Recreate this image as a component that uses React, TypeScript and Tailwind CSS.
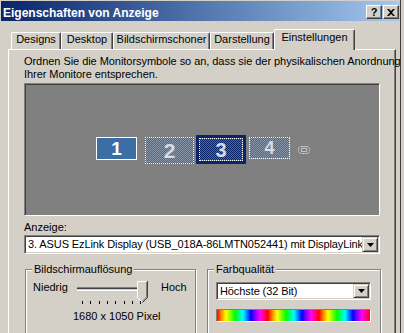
import type { ReactNode } from 'react'

function CaptionButton({ children }: { children: ReactNode }) {
  return (
    <div className="flex h-[14px] w-[16px] items-center justify-center border border-t-white border-l-white border-r-[#404040] border-b-[#404040] bg-[#d4d0c8] shadow-[inset_-1px_-1px_0_#808080]">
      {children}
    </div>
  )
}

function TitleBar() {
  return (
    <div className="flex h-[20px] w-[399px] items-start bg-gradient-to-r from-[#0a246a] to-[#a6caf0]">
      <div className="ml-[2px] mt-[6px] text-[12px] font-bold text-white">Eigenschaften von Anzeige</div>
      <div className="ml-auto mr-[1px] mt-[4px] flex gap-[1px]">
        <CaptionButton>
          <span className="text-[11px] font-bold leading-[11px]">?</span>
        </CaptionButton>
        <CaptionButton>
          <svg width="8" height="7" viewBox="0 0 8 7">
            <path d="M0 0h2l2 2 2-2h2L5 3.5 8 7H6L4 5 2 7H0l3-3.5z" fill="#000" />
          </svg>
        </CaptionButton>
      </div>
    </div>
  )
}

function Tab({ label, className, active }: { label: string; className: string; active?: boolean }) {
  if (active) {
    return (
      <div className={`mb-[-1px] flex h-[21px] justify-center rounded-t-[2px] border-t border-l border-r border-t-white border-l-white border-r-[#404040] bg-[#d4d0c8] pt-[1px] shadow-[inset_-1px_0_0_#808080] ${className}`}>
        {label}
      </div>
    )
  }
  return (
    <div className={`flex h-[17px] justify-center rounded-t-[2px] border-t border-l border-r border-t-white border-l-white border-r-[#404040] shadow-[inset_-1px_0_0_#808080] ${className}`}>
      {label}
    </div>
  )
}

function DropArrow() {
  return (
    <div className="flex h-full w-[16px] shrink-0 items-center justify-center border border-t-[#d4d0c8] border-l-[#d4d0c8] border-r-[#404040] border-b-[#404040] bg-[#d4d0c8] shadow-[inset_1px_1px_0_white,inset_-1px_-1px_0_#808080]">
      <svg width="7" height="4" viewBox="0 0 7 4">
        <path d="M0 0h7L3.5 4z" fill="#000" />
      </svg>
    </div>
  )
}

function Combo({ text, className }: { text: string; className: string }) {
  return (
    <div className={`flex border border-t-[#808080] border-l-[#808080] border-r-white border-b-white bg-white p-px shadow-[inset_1px_1px_0_#404040,inset_-1px_-1px_0_#d4d0c8] ${className}`}>
      <div className="flex flex-1 items-center overflow-hidden whitespace-nowrap pl-[2px] tracking-[-0.1px]">{text}</div>
      <DropArrow />
    </div>
  )
}

function Monitors() {
  return (
    <div className="relative mt-[2px] h-[133px] w-[356px] border border-t-[#808080] border-l-[#808080] border-r-white border-b-white bg-[#808080] shadow-[inset_1px_1px_0_#404040]">
      <div className="absolute left-[71px] top-[53px] flex h-[23px] w-[41px] items-center justify-center border border-white bg-[#3a6ea5] text-[19px] font-bold leading-none text-white">
        1
      </div>
      <div className="absolute left-[120px] top-[53px] flex h-[27px] w-[49px] items-center justify-center border border-dotted border-white bg-[image:repeating-conic-gradient(#3a6ea5_0%_25%,#8896a8_0%_50%)] bg-[length:2px_2px] text-[21px] font-bold leading-none text-[#d6dce6]">
        2
      </div>
      <div className="absolute left-[171px] top-[51px] h-[29px] w-[50px] bg-[#0a246a] p-[3px]">
        <div className="flex h-full w-full items-center justify-center border border-dotted border-white bg-[image:repeating-conic-gradient(#0a246a_0%_25%,#3a6ea5_0%_50%)] bg-[length:2px_2px] text-[20px] font-bold leading-none text-[#d6dce6]">
          3
        </div>
      </div>
      <div className="absolute left-[224px] top-[53px] flex h-[22px] w-[41px] items-center justify-center border border-dotted border-white bg-[image:repeating-conic-gradient(#3a6ea5_0%_25%,#8896a8_0%_50%)] bg-[length:2px_2px] text-[18px] font-bold leading-none text-[#d6dce6]">
        4
      </div>
      <svg className="absolute left-[273px] top-[62px]" width="12" height="8" viewBox="0 0 12 8">
        <rect x="0.5" y="0.5" width="11" height="7" rx="3" fill="none" stroke="#fff" strokeDasharray="1 1" />
        <rect x="3.5" y="2.5" width="5" height="3" fill="none" stroke="#fff" strokeDasharray="1 1" />
      </svg>
    </div>
  )
}

function GroupBox({ label, className, children }: { label: string; className: string; children: ReactNode }) {
  return (
    <div className={`relative h-[80px] border border-[#808080] shadow-[inset_1px_1px_0_white,1px_1px_0_white] ${className}`}>
      <div className="absolute -top-[7px] left-[6px] bg-[#d4d0c8] px-[2px]">{label}</div>
      {children}
    </div>
  )
}

function Slider() {
  const ticks = [5, 13, 22, 30, 38, 47, 55, 63]
  return (
    <svg width="74" height="24" viewBox="0 0 74 24" className="shrink-0">
      <rect x="0" y="6" width="70" height="1" fill="#808080" />
      <rect x="0" y="7" width="70" height="1" fill="#404040" />
      <rect x="0" y="8" width="70" height="1" fill="#d4d0c8" />
      <rect x="0" y="9" width="70" height="1" fill="#fff" />
      {ticks.map((t) => (
        <rect key={t} x={t} y="20" width="1" height="3" fill="#000" />
      ))}
      <path d="M60 0H70V16L65 21L60 16Z" fill="#d4d0c8" />
      <path d="M60.5 16.5V0.5H69.5" fill="none" stroke="#fff" />
      <path d="M60.5 16.5L65 21" fill="none" stroke="#fff" />
      <path d="M70.5 0V16.5L65.5 21.5" fill="none" stroke="#404040" />
      <path d="M69.5 1V16L65 20.5" fill="none" stroke="#808080" />
    </svg>
  )
}

function Panel() {
  return (
    <div className="ml-[7px] h-[300px] w-[388px] border-t border-l border-r border-t-white border-l-white border-r-[#404040] pl-[15px] pt-[5px] shadow-[inset_-1px_0_0_#808080]">
      <div className="whitespace-nowrap tracking-[-0.05px]">
        Ordnen Sie die Monitorsymbole so an, dass sie der physikalischen Anordnung
        <br />
        Ihrer Monitore entsprechen.
      </div>
      <Monitors />
      <div className="mt-[5px]">Anzeige:</div>
      <Combo
        className="mt-px h-[19px] w-[356px]"
        text="3. ASUS EzLink Display (USB_018A-86LMTN052441) mit DisplayLink Device"
      />
      <div className="mt-[15px] flex">
        <GroupBox label="Bildschirmauflösung" className="ml-px w-[171px] pl-[7px] pt-[11px]">
          <div className="flex items-start">
            <div className="w-[44px]">Niedrig</div>
            <Slider />
            <div className="ml-[10px]">Hoch</div>
          </div>
          <div className="ml-[40px] mt-[5px]">1680 x 1050 Pixel</div>
        </GroupBox>
        <GroupBox label="Farbqualität" className="ml-[11px] w-[174px] pl-[8px] pt-[12px]">
          <Combo className="h-[18px] w-[155px]" text="Höchste (32 Bit)" />
          <div className="mt-[9px] h-[13px] w-[155px] border border-t-[#808080] border-l-[#808080] border-r-white border-b-white bg-[image:repeating-linear-gradient(90deg,#ff0000_0px,#ff8000_4px,#ffff00_9px,#00ff00_18px,#00ffff_26px,#0000ff_34px,#8000ff_38px,#ff00ff_43px,#ff0000_51px)]" />
        </GroupBox>
      </div>
    </div>
  )
}

export default function App() {
  return (
    <div className="h-[333px] w-[404px] overflow-hidden bg-[#d4d0c8] font-['Liberation_Sans',Arial,sans-serif] text-[11px] leading-[13px] text-black">
      <div className="h-full w-[401px] border-r border-r-[#404040] pl-px pt-px">
        <TitleBar />
        <div className="relative z-10 flex h-[28px] items-end pl-[10px]">
          <Tab label="Designs" className="w-[50px]" />
          <Tab label="Desktop" className="w-[52px]" />
          <Tab label="Bildschirmschoner" className="w-[97px]" />
          <Tab label="Darstellung" className="w-[64px]" />
          <Tab label="Einstellungen" className="w-[81px]" active />
        </div>
        <Panel />
      </div>
    </div>
  )
}
